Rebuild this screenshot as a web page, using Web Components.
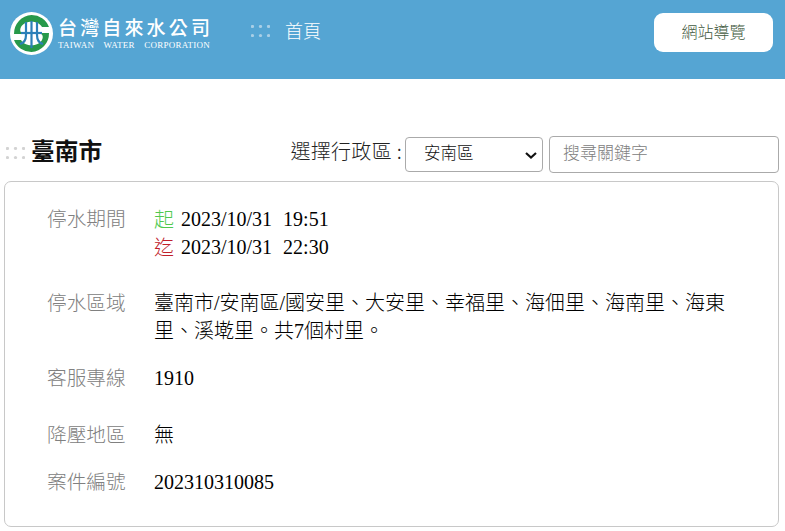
<!DOCTYPE html>
<html lang="zh-Hant">
<head>
<meta charset="utf-8">
<title>停水資訊</title>
<style>
  html, body { margin: 0; background: #fff; }
  body { font-family: "Liberation Serif", "Noto Sans CJK TC", serif; color: #000; }
</style>
</head>
<body>
<site-header></site-header>
<city-bar city="臺南市"></city-bar>
<info-card>
  <info-row label="停水期間" gap="28">
    <time-line kind="start" mark="起">2023/10/31&nbsp;&nbsp;19:51</time-line>
    <time-line kind="end" mark="迄">2023/10/31&nbsp;&nbsp;22:30</time-line>
  </info-row>
  <info-row label="停水區域" gap="19">臺南市/安南區/國安里、大安里、幸福里、海佃里、海南里、海東里、溪墘里。共7個村里。</info-row>
  <info-row label="客服專線" gap="29">1910</info-row>
  <info-row label="降壓地區" gap="19">無</info-row>
  <info-row label="案件編號" gap="0">202310310085</info-row>
</info-card>

<script>
// dotted marker used in the header and next to the city name
const dots = (color) => `
  <svg width="19" height="12" viewBox="0 0 19 12" aria-hidden="true">
    <g fill="${color}">
      <circle cx="1.5" cy="1.5" r="1.6"/><circle cx="9.5" cy="1.5" r="1.6"/><circle cx="17.5" cy="1.5" r="1.6"/>
      <circle cx="1.5" cy="10.5" r="1.6"/><circle cx="9.5" cy="10.5" r="1.6"/><circle cx="17.5" cy="10.5" r="1.6"/>
    </g>
  </svg>`;

const templateHeader = document.createElement("template");
templateHeader.innerHTML = `
<style>
:host{
  display: flex;
  height: 79px;
  background: #55a5d3;
  color: #fff;
  font-family: "Noto Sans CJK TC", sans-serif;
  box-sizing: border-box;
  padding: 12px 12px 0 10px;
  align-items: flex-start;
}
.logo{ display: flex; gap: 5px; width: 241px; }
.logo svg{ flex: none; }
.names{ display: flex; flex-direction: column; padding-top: 4px; }
.zh{ font-size: 19px; line-height: 21px; font-weight: 500; letter-spacing: 3.15px; white-space: nowrap; }
.en{ font-family: "Liberation Serif", serif; font-size: 9px; line-height: 12px; margin-top: 2px; word-spacing: 7px; letter-spacing: .25px; white-space: nowrap; }
nav{ display: flex; align-items: center; gap: 15px; height: 36px; font-size: 18px; font-weight: 300; }
nav svg{ margin-top: 1px; }
button{
  margin-left: auto;
  margin-top: 1px;
  width: 119px;
  height: 39px;
  padding: 0 0 4px;
  border: 0;
  border-radius: 9px;
  background: #fff;
  color: #3f5a40;
  font: 300 16px "Noto Sans CJK TC", sans-serif;
}
</style>
<div class="logo">
  <svg width="43" height="43" viewBox="0 0 43 43" aria-hidden="true">
    <circle cx="21.5" cy="21.5" r="21.5" fill="#fff"/>
    <path d="M21.5 3A18.5 18.5 0 0 1 39 15H32C28 8 15 8 11 15C9 19 11 22 15 22H4A18.5 18.5 0 0 1 21.5 3Z" fill="#27994a"/>
    <path d="M21.5 40A18.5 18.5 0 0 1 4 28H11C15 35 28 35 32 28C34 24 32 21 28 21H39A18.5 18.5 0 0 1 21.5 40Z" fill="#27994a"/>
    <g fill="none" stroke="#2b7fb8" stroke-width="2.2">
      <path d="M21.5 9V36"/>
      <path d="M16 10V23C16 28 14 31 10 32"/>
      <path d="M27 10V23C27 28 29 31 33 32"/>
      <path d="M11 21H32"/>
    </g>
  </svg>
  <div class="names">
    <span class="zh">台灣自來水公司</span>
    <span class="en">TAIWAN WATER CORPORATION</span>
  </div>
</div>
<nav>${dots("#a9cfe6")}<span>首頁</span></nav>
<button type="button">網站導覽</button>
`;

class SiteHeader extends HTMLElement {
  constructor() {
    super();
    this.attachShadow({ mode: "open" });
    this.shadowRoot.appendChild(templateHeader.content.cloneNode(true));
  }
}
customElements.define("site-header", SiteHeader);

const templateBar = document.createElement("template");
templateBar.innerHTML = `
<style>
:host{
  display: flex;
  align-items: center;
  box-sizing: border-box;
  height: 102px;
  padding: 57px 6px 9px 6px;
  font-family: "Noto Sans CJK TC", sans-serif;
}
.title{ display: flex; align-items: center; gap: 6px; }
.title svg{ margin-top: -2px; }
h1{ margin: 0 0 9px; font-size: 23.7px; line-height: 30px; font-weight: 700; color: #111; }
.filter{ margin-left: auto; display: flex; align-items: center; }
label{ font-size: 20px; font-weight: 300; letter-spacing: .3px; color: #222; margin: 0 3px 8px 0; white-space: nowrap; }
select{
  appearance: none;
  width: 138px;
  height: 35px;
  box-sizing: border-box;
  margin-right: 6px;
  padding: 0 0 5px 18px;
  border: 1px solid #aaa;
  border-radius: 4px;
  background: #fff url("data:image/svg+xml,%3Csvg xmlns='http://www.w3.org/2000/svg' width='12' height='7'%3E%3Cpath d='M1 1l5 4.5L11 1' fill='none' stroke='%23111' stroke-width='2.2'/%3E%3C/svg%3E") no-repeat 119px 14px;
  color: #111;
  font: 300 16.5px "Noto Sans CJK TC", sans-serif;
}
input{
  width: 230px;
  height: 37px;
  box-sizing: border-box;
  padding: 0 13px 6px;
  border: 1px solid #aaa;
  border-radius: 4px;
  font: 300 17px "Noto Sans CJK TC", sans-serif;
}
input::placeholder{ color: #808080; opacity: 1; }
</style>
<div class="title">${dots("#d3d3d3")}<h1></h1></div>
<div class="filter">
  <label for="area">選擇行政區 :</label>
  <select id="area"><option>安南區</option></select>
  <input type="text" placeholder="搜尋關鍵字" />
</div>
`;

class CityBar extends HTMLElement {
  constructor() {
    super();
    this.attachShadow({ mode: "open" });
    this.shadowRoot.appendChild(templateBar.content.cloneNode(true));
    this.shadowRoot.querySelector("h1").textContent = this.getAttribute("city");
  }
}
customElements.define("city-bar", CityBar);

const templateCard = document.createElement("template");
templateCard.innerHTML = `
<style>
:host{
  display: block;
  box-sizing: border-box;
  width: 775px;
  height: 346px;
  margin-left: 4px;
  padding: 23px 45px 0 42px;
  border: 1px solid #c8c8c8;
  border-radius: 7px;
}
</style>
<slot></slot>
`;

class InfoCard extends HTMLElement {
  constructor() {
    super();
    this.attachShadow({ mode: "open" });
    this.shadowRoot.appendChild(templateCard.content.cloneNode(true));
  }
}
customElements.define("info-card", InfoCard);

const templateRow = document.createElement("template");
templateRow.innerHTML = `
<style>
:host{
  display: grid;
  grid-template-columns: 107px 1fr;
  font-size: 20px;
  line-height: 28px;
  font-family: "Liberation Serif", "Noto Sans CJK TC", serif;
}
.label{
  font-family: "Noto Sans CJK TC", sans-serif;
  font-size: 19.7px;
  font-weight: 300;
  color: #808080;
  margin-top: -1px;
}
.value{ color: #000; font-weight: 300; }
</style>
<div class="label"></div>
<div class="value"><slot></slot></div>
`;

class InfoRow extends HTMLElement {
  constructor() {
    super();
    this.attachShadow({ mode: "open" });
    this.shadowRoot.appendChild(templateRow.content.cloneNode(true));
    this.shadowRoot.querySelector(".label").textContent = this.getAttribute("label");
    this.style.marginBottom = this.getAttribute("gap") + "px";
  }
}
customElements.define("info-row", InfoRow);

const templateTime = document.createElement("template");
templateTime.innerHTML = `
<style>
:host{ display: flex; gap: 7px; word-spacing: .5px; }
.mark{ font-family: "Noto Sans CJK TC", sans-serif; font-weight: 300; }
:host([kind="start"]) .mark{ color: #4fc94f; }
:host([kind="end"]) .mark{ color: #c0202a; }
</style>
<span class="mark"></span><span><slot></slot></span>
`;

class TimeLine extends HTMLElement {
  constructor() {
    super();
    this.attachShadow({ mode: "open" });
    this.shadowRoot.appendChild(templateTime.content.cloneNode(true));
    this.shadowRoot.querySelector(".mark").textContent = this.getAttribute("mark");
  }
}
customElements.define("time-line", TimeLine);
</script>
</body>
</html>
